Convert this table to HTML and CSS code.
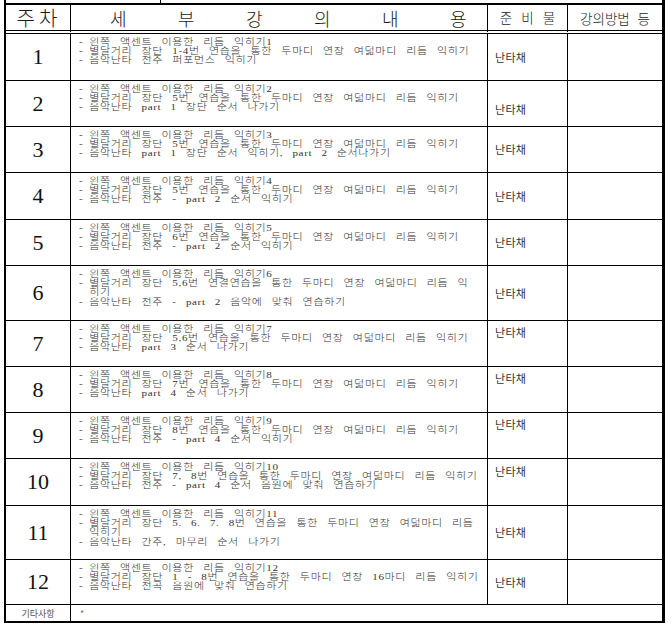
FILE: index.html
```html
<!DOCTYPE html>
<html lang="ko">
<head>
<meta charset="utf-8">
<title>세부 강의 내용</title>
<link rel="stylesheet" href="styles.css">
</head>
<body>
<div class="sheet">
  <div class="prev"><span class="prev-a"></span><span class="prev-b"></span></div>
  <table class="plan">
    <thead>
      <tr class="head">
        <th class="w1"><span class="h-week">주차</span></th>
        <th class="w2"><div class="spread"><span>세</span><span>부</span><span>강</span><span>의</span><span>내</span><span>용</span></div></th>
        <th class="w3"><div class="prep-h"><span>준</span><span>비</span><span>물</span></div></th>
        <th class="w4"><span class="method-h">강의방법 등</span></th>
      </tr>
    </thead>
    <tbody>
      <tr class="h47">
        <td class="num">1</td>
        <td class="detail">
          <div class="ln"><span class="dash">-</span>왼쪽 액센트 이용한 리듬 익히기1</div>
          <div class="ln"><span class="dash">-</span>별달거리 장단 1-4번 연습을 통한 두마디 연장 여덟마디 리듬 익히기</div>
          <div class="ln"><span class="dash">-</span>음악난타 전주 퍼포먼스 익히기</div>
        </td>
        <td class="prep">난타채</td>
        <td></td>
      </tr>
      <tr class="h46">
        <td class="num">2</td>
        <td class="detail">
          <div class="ln"><span class="dash">-</span>왼쪽 액센트 이용한 리듬 익히기2</div>
          <div class="ln"><span class="dash">-</span>별달거리 장단 5번 연습을 통한 두마디 연장 여덟마디 리듬 익히기</div>
          <div class="ln"><span class="dash">-</span>음악난타 part 1 장단 순서 나가기</div>
        </td>
        <td class="prep low">난타채</td>
        <td></td>
      </tr>
      <tr class="h46">
        <td class="num">3</td>
        <td class="detail">
          <div class="ln"><span class="dash">-</span>왼쪽 액센트 이용한 리듬 익히기3</div>
          <div class="ln"><span class="dash">-</span>별달거리 장단 5번 연습을 통한 두마디 연장 여덟마디 리듬 익히기</div>
          <div class="ln"><span class="dash">-</span>음악난타 part 1 장단 순서 익히기, part 2 순서나가기</div>
        </td>
        <td class="prep">난타채</td>
        <td></td>
      </tr>
      <tr class="h47">
        <td class="num">4</td>
        <td class="detail">
          <div class="ln"><span class="dash">-</span>왼쪽 액센트 이용한 리듬 익히기4</div>
          <div class="ln"><span class="dash">-</span>별달거리 장단 5번 연습을 통한 두마디 연장 여덟마디 리듬 익히기</div>
          <div class="ln"><span class="dash">-</span>음악난타 전주 - part 2 순서 익히기</div>
        </td>
        <td class="prep">난타채</td>
        <td></td>
      </tr>
      <tr class="h46">
        <td class="num">5</td>
        <td class="detail">
          <div class="ln"><span class="dash">-</span>왼쪽 액센트 이용한 리듬 익히기5</div>
          <div class="ln"><span class="dash">-</span>별달거리 장단 6번 연습을 통한 두마디 연장 여덟마디 리듬 익히기</div>
          <div class="ln"><span class="dash">-</span>음악난타 전주 - part 2 순서 익히기</div>
        </td>
        <td class="prep">난타채</td>
        <td></td>
      </tr>
      <tr class="h55">
        <td class="num">6</td>
        <td class="detail">
          <div class="ln"><span class="dash">-</span>왼쪽 액센트 이용한 리듬 익히기6</div>
          <div class="ln"><span class="dash">-</span>별달거리 장단 5,6번 연결연습을 통한 두마디 연장 여덟마디 리듬 익</div>
          <div class="ln cont">히기</div>
          <div class="ln"><span class="dash">-</span>음악난타 전주 - part 2 음악에 맞춰 연습하기</div>
        </td>
        <td class="prep">난타채</td>
        <td></td>
      </tr>
      <tr class="h46">
        <td class="num">7</td>
        <td class="detail">
          <div class="ln"><span class="dash">-</span>왼쪽 액센트 이용한 리듬 익히기7</div>
          <div class="ln"><span class="dash">-</span>별달거리 장단 5,6번 연습을 통한 두마디 연장 여덟마디 리듬 익히기</div>
          <div class="ln"><span class="dash">-</span>음악난타 part 3 순서 나가기</div>
        </td>
        <td class="prep high">난타채</td>
        <td></td>
      </tr>
      <tr class="h46">
        <td class="num">8</td>
        <td class="detail">
          <div class="ln"><span class="dash">-</span>왼쪽 액센트 이용한 리듬 익히기8</div>
          <div class="ln"><span class="dash">-</span>별달거리 장단 7번 연습을 통한 두마디 연장 여덟마디 리듬 익히기</div>
          <div class="ln"><span class="dash">-</span>음악난타 part 4 순서 나가기</div>
        </td>
        <td class="prep high">난타채</td>
        <td></td>
      </tr>
      <tr class="h46">
        <td class="num">9</td>
        <td class="detail">
          <div class="ln"><span class="dash">-</span>왼쪽 액센트 이용한 리듬 익히기9</div>
          <div class="ln"><span class="dash">-</span>별달거리 장단 8번 연습을 통한 두마디 연장 여덟마디 리듬 익히기</div>
          <div class="ln"><span class="dash">-</span>음악난타 전주 - part 4 순서 익히기</div>
        </td>
        <td class="prep high">난타채</td>
        <td></td>
      </tr>
      <tr class="h47">
        <td class="num">10</td>
        <td class="detail">
          <div class="ln"><span class="dash">-</span>왼쪽 액센트 이용한 리듬 익히기10</div>
          <div class="ln"><span class="dash">-</span>별달거리 장단 7, 8번 연습을 통한 두마디 연장 여덟마디 리듬 익히기</div>
          <div class="ln"><span class="dash">-</span>음악난타 전주 - part 4 순서 음원에 맞춰 연습하기</div>
        </td>
        <td class="prep high">난타채</td>
        <td></td>
      </tr>
      <tr class="h54">
        <td class="num">11</td>
        <td class="detail">
          <div class="ln"><span class="dash">-</span>왼쪽 액센트 이용한 리듬 익히기11</div>
          <div class="ln"><span class="dash">-</span>별달거리 장단 5. 6. 7. 8번 연습을 통한 두마디 연장 여덟마디 리듬</div>
          <div class="ln cont">익히기</div>
          <div class="ln"><span class="dash">-</span>음악난타 간주, 마무리 순서 나가기</div>
        </td>
        <td class="prep">난타채</td>
        <td></td>
      </tr>
      <tr class="h45">
        <td class="num">12</td>
        <td class="detail">
          <div class="ln"><span class="dash">-</span>왼쪽 액센트 이용한 리듬 익히기12</div>
          <div class="ln"><span class="dash">-</span>별달거리 장단 1 - 8번 연습을 통한 두마디 연장 16마디 리듬 익히기</div>
          <div class="ln"><span class="dash">-</span>음악난타 전곡 음원에 맞춰 연습하기</div>
        </td>
        <td class="prep">난타채</td>
        <td></td>
      </tr>
      <tr class="foot">
        <td class="etc">기타사항</td>
        <td class="etc-body" colspan="3">*</td>
      </tr>
    </tbody>
  </table>
</div>
</body>
</html>
```
FILE: styles.css
```css
html, body {
  margin: 0;
  padding: 0;
  background: #fff;
}

body {
  font-family: "Noto Sans CJK KR", sans-serif;
  color: #1a1a1a;
}

.sheet {
  padding-left: 4px;
  width: 661px;
}

.prev {
  display: flex;
  height: 3px;
  border-left: 2px solid #000;
  border-right: 3px solid #000;
}

.prev-a {
  width: 154px;
  border-right: 1px solid #000;
}

.plan {
  border-collapse: separate;
  border-spacing: 0;
  table-layout: fixed;
  width: 661px;
  box-sizing: border-box;
  border: 2px solid #000;
  border-right-width: 3px;
}

.plan th,
.plan td {
  padding: 0;
  box-sizing: border-box;
  border-right: 1px solid #000;
  border-bottom: 1px solid #000;
}

.plan th:last-child,
.plan td:last-child {
  border-right: 0;
}

.plan .foot td {
  border-bottom: 0;
}

.w1 { width: 65px; }
.w2 { width: 417px; }
.w3 { width: 80px; }
.w4 { width: 94px; }

.head {
  height: 29px;
}

.head th {
  border-bottom: 4px double #000;
  font-weight: 300;
  color: #1a1a1a;
  vertical-align: middle;
  line-height: 1;
}

.w1, .w3, .w4 {
  text-align: center;
}

.plan th.w2 {
  text-align: left;
  padding-left: 39px;
}

.h-week {
  font-size: 20px;
  letter-spacing: 4px;
  padding-left: 2px;
}

.spread {
  display: grid;
  grid-template-columns: repeat(6, 68px);
  justify-items: start;
  font-size: 18px;
}

.prep-h {
  display: flex;
  justify-content: center;
  gap: 9px;
  font-size: 13.5px;
}

.method-h {
  font-size: 13.5px;
  word-spacing: 4px;
}

.h47 { height: 47px; }
.h46 { height: 46px; }
.h45 { height: 45px; }
.h55 { height: 55px; }
.h54 { height: 54px; }

.num {
  font-family: "Liberation Serif", serif;
  font-size: 22px;
  line-height: 1;
  text-align: center;
  vertical-align: middle;
  color: #111;
}

.detail {
  vertical-align: top;
  padding: 4px 0 0 8px !important;
  font-family: "Liberation Serif", "Noto Sans CJK KR", serif;
  font-size: 8.7px;
  font-weight: 300;
  letter-spacing: 0.5px;
  word-spacing: 4.6px;
  line-height: 9.2px;
  color: #333;
}

.ln {
  white-space: nowrap;
  height: 9.2px;
  transform: scaleX(1.27);
  transform-origin: 0 50%;
}

.dash {
  display: inline-block;
  width: 8px;
  letter-spacing: 0;
}

.cont {
  padding-left: 8px;
}

.prep {
  vertical-align: middle;
  padding-left: 7px !important;
  font-size: 11px;
  line-height: 11px;
  letter-spacing: 0.3px;
  color: #333;
}

.prep.low {
  padding-top: 12px !important;
}

.prep.high {
  padding-bottom: 22px !important;
}

.foot {
  height: 16px;
}

.etc {
  text-align: center;
  vertical-align: middle;
  font-size: 9px;
  color: #555;
  line-height: 1;
}

.etc-body {
  vertical-align: middle;
  padding-left: 9px !important;
  font-size: 9px;
  color: #777;
  line-height: 1;
}
```
